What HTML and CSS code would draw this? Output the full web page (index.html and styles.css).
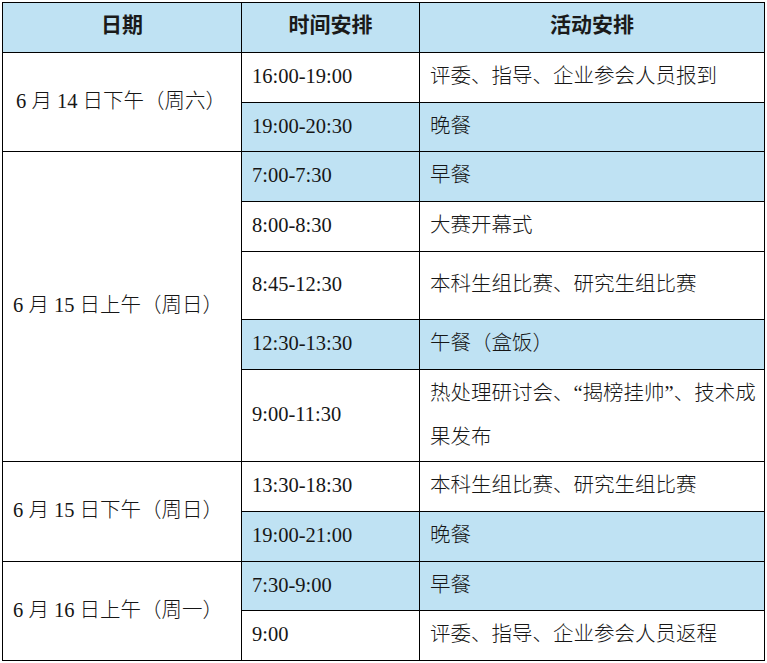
FILE: index.html
```html
<!DOCTYPE html>
<html lang="zh-CN">
<head>
<meta charset="utf-8">
<title>日程安排</title>
<link rel="stylesheet" href="styles.css">
</head>
<body>
<table class="schedule">
  <colgroup>
    <col class="c-date">
    <col class="c-time">
    <col class="c-act">
  </colgroup>
  <thead>
    <tr class="h50">
      <th>日期</th>
      <th>时间安排</th>
      <th>活动安排</th>
    </tr>
  </thead>
  <tbody>
    <tr class="h50">
      <td rowspan="2" class="date date-first">6 月 14 日下午（周六）</td>
      <td>16:00-19:00</td>
      <td>评委、指导、企业参会人员报到</td>
    </tr>
    <tr class="h49 blue">
      <td>19:00-20:30</td>
      <td>晚餐</td>
    </tr>
    <tr class="h50 blue">
      <td rowspan="5" class="date">6 月 15 日上午（周日）</td>
      <td>7:00-7:30</td>
      <td>早餐</td>
    </tr>
    <tr class="h50">
      <td>8:00-8:30</td>
      <td>大赛开幕式</td>
    </tr>
    <tr class="h68">
      <td>8:45-12:30</td>
      <td>本科生组比赛、研究生组比赛</td>
    </tr>
    <tr class="h50 blue">
      <td>12:30-13:30</td>
      <td>午餐（盒饭）</td>
    </tr>
    <tr class="h92">
      <td>9:00-11:30</td>
      <td class="multi">热处理研讨会、“揭榜挂帅”、技术成果发布</td>
    </tr>
    <tr class="h50">
      <td rowspan="2" class="date">6 月 15 日下午（周日）</td>
      <td>13:30-18:30</td>
      <td>本科生组比赛、研究生组比赛</td>
    </tr>
    <tr class="h50 blue">
      <td>19:00-21:00</td>
      <td>晚餐</td>
    </tr>
    <tr class="h49 blue">
      <td rowspan="2" class="date">6 月 16 日上午（周一）</td>
      <td>7:30-9:00</td>
      <td>早餐</td>
    </tr>
    <tr class="h50">
      <td>9:00</td>
      <td>评委、指导、企业参会人员返程</td>
    </tr>
  </tbody>
</table>
</body>
</html>
```

FILE: styles.css
```css
html, body {
  margin: 0;
  padding: 0;
  background: #ffffff;
}

body {
  padding: 2px 0 0 2px;
}

.schedule {
  border-collapse: collapse;
  table-layout: fixed;
  width: 762px;
  font-family: "Liberation Serif", "Noto Sans CJK SC", sans-serif;
  font-weight: 300;
  font-size: 20.5px;
  color: #161616;
}

.c-date { width: 239px; }
.c-time { width: 178px; }
.c-act { width: 345px; }

.schedule th,
.schedule td {
  border: 1px solid #000000;
  padding: 0 10px 3px 10px;
  vertical-align: middle;
  text-align: left;
  line-height: 30px;
  white-space: nowrap;
}

.schedule th {
  background: #bfe2f3;
  font-family: "Noto Sans CJK SC", sans-serif;
  font-weight: 700;
  font-size: 21px;
  text-align: center;
  color: #1a1a1a;
  padding-bottom: 10px;
}

.schedule tr.blue td {
  background: #bfe2f3;
}

.schedule tr.blue td.date {
  background: #ffffff;
}

.schedule td.date {
  padding-left: 10px;
}

.schedule td.date-first {
  padding-left: 13px;
}

.schedule td.multi {
  white-space: normal;
  line-height: 44px;
  padding-right: 4px;
  padding-bottom: 2px;
}

.h49 { height: 49px; }
.h50 { height: 50px; }
.h68 { height: 68px; }
.h92 { height: 92px; }
```
